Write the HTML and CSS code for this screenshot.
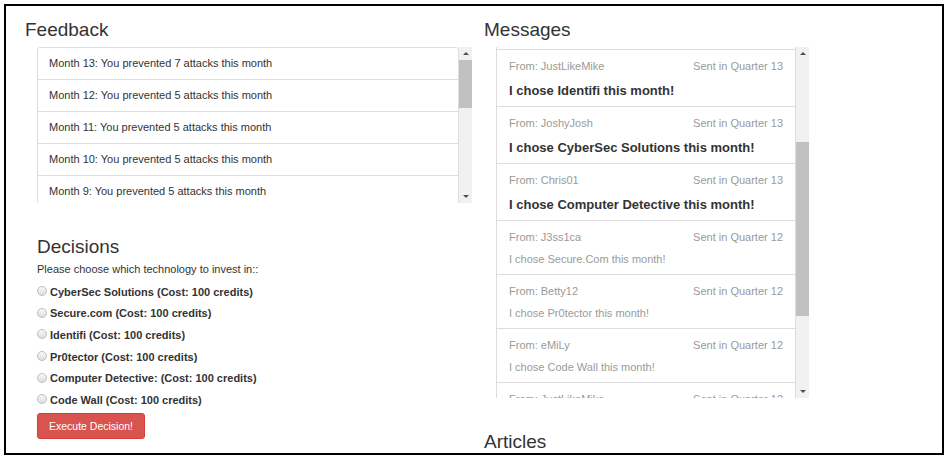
FILE: index.html
```html
<!DOCTYPE html>
<html lang="en">
<head>
  <meta charset="utf-8" />
  <title>Dashboard</title>
  <meta name="viewport" content="width=device-width, initial-scale=1" />
  <link rel="stylesheet" href="styles.css">
</head>
<body>
  <div class="frame">
    <div class="page">
      <div class="col col-left">
        <h3 class="title">Feedback</h3>
        <div class="scroll-box feedback-box">
          <ul class="list feedback">
            <li>Month 13: You prevented 7 attacks this month</li>
            <li>Month 12: You prevented 5 attacks this month</li>
            <li>Month 11: You prevented 5 attacks this month</li>
            <li>Month 10: You prevented 5 attacks this month</li>
            <li>Month 9: You prevented 5 attacks this month</li>
            <li>Month 8: You prevented 4 attacks this month</li>
            <li>Month 7: You prevented 4 attacks this month</li>
            <li>Month 6: You prevented 6 attacks this month</li>
            <li>Month 5: You prevented 3 attacks this month</li>
            <li>Month 4: You prevented 3 attacks this month</li>
            <li>Month 3: You prevented 2 attacks this month</li>
            <li>Month 2: You prevented 2 attacks this month</li>
            <li>Month 1: You prevented 1 attacks this month</li>
          </ul>
          <div class="scrollbar">
            <span class="arrow up"></span>
            <div class="track"><div class="thumb" style="margin-top: 0; height: 48px"></div></div>
            <span class="arrow down"></span>
          </div>
        </div>

        <div class="decisions">
          <h3 class="title">Decisions</h3>
          <p class="hint">Please choose which technology to invest in::</p>
          <label class="radio"><input type="radio" name="tech" />CyberSec Solutions (Cost: 100 credits)</label>
          <label class="radio"><input type="radio" name="tech" />Secure.com (Cost: 100 credits)</label>
          <label class="radio"><input type="radio" name="tech" />Identifi (Cost: 100 credits)</label>
          <label class="radio"><input type="radio" name="tech" />Pr0tector (Cost: 100 credits)</label>
          <label class="radio"><input type="radio" name="tech" />Computer Detective: (Cost: 100 credits)</label>
          <label class="radio"><input type="radio" name="tech" />Code Wall (Cost: 100 credits)</label>
          <button class="btn-danger">Execute Decision!</button>
        </div>
      </div>

      <div class="col col-right">
        <h3 class="title">Messages</h3>
        <div class="scroll-box messages-box">
          <ul class="list messages" id="messages">
            <li class="msg new">
              <div class="msg-head"><span>From: Betty12</span><span>Sent in Quarter 13</span></div>
              <div class="msg-body">I chose Code Wall this month!</div>
            </li>
            <li class="msg new">
              <div class="msg-head"><span>From: eMiLy</span><span>Sent in Quarter 13</span></div>
              <div class="msg-body">I chose Secure.Com this month!</div>
            </li>
            <li class="msg new">
              <div class="msg-head"><span>From: J3ss1ca</span><span>Sent in Quarter 13</span></div>
              <div class="msg-body">I chose Pr0tector this month!</div>
            </li>
            <li class="msg new">
              <div class="msg-head"><span>From: JustLikeMike</span><span>Sent in Quarter 13</span></div>
              <div class="msg-body">I chose Identifi this month!</div>
            </li>
            <li class="msg new">
              <div class="msg-head"><span>From: JoshyJosh</span><span>Sent in Quarter 13</span></div>
              <div class="msg-body">I chose CyberSec Solutions this month!</div>
            </li>
            <li class="msg new">
              <div class="msg-head"><span>From: Chris01</span><span>Sent in Quarter 13</span></div>
              <div class="msg-body">I chose Computer Detective this month!</div>
            </li>
            <li class="msg">
              <div class="msg-head"><span>From: J3ss1ca</span><span>Sent in Quarter 12</span></div>
              <div class="msg-body">I chose Secure.Com this month!</div>
            </li>
            <li class="msg">
              <div class="msg-head"><span>From: Betty12</span><span>Sent in Quarter 12</span></div>
              <div class="msg-body">I chose Pr0tector this month!</div>
            </li>
            <li class="msg">
              <div class="msg-head"><span>From: eMiLy</span><span>Sent in Quarter 12</span></div>
              <div class="msg-body">I chose Code Wall this month!</div>
            </li>
            <li class="msg">
              <div class="msg-head"><span>From: JustLikeMike</span><span>Sent in Quarter 12</span></div>
              <div class="msg-body">I chose Identifi this month!</div>
            </li>
            <li class="msg">
              <div class="msg-head"><span>From: JoshyJosh</span><span>Sent in Quarter 12</span></div>
              <div class="msg-body">I chose Code Wall this month!</div>
            </li>
            <li class="msg">
              <div class="msg-head"><span>From: Chris01</span><span>Sent in Quarter 12</span></div>
              <div class="msg-body">I chose Secure.Com this month!</div>
            </li>
          </ul>
          <div class="scrollbar">
            <span class="arrow up"></span>
            <div class="track"><div class="thumb" style="margin-top: 82px; height: 174px"></div></div>
            <span class="arrow down"></span>
          </div>
        </div>
        <h3 class="title">Articles</h3>
      </div>
    </div>
  </div>

  <script>
    const messages = document.getElementById("messages");
    const firstUnread = messages.children[3];
    messages.scrollTop = firstUnread.offsetTop - messages.offsetTop - 2;
  </script>
</body>
</html>
```

FILE: styles.css
```css
* {
  box-sizing: border-box;
}
body {
  margin: 0;
  background: #fff;
  color: #333;
  font-family: "Liberation Sans", Arial, sans-serif;
  font-size: 11px;
}
.frame {
  position: relative;
  margin: 4px 0 0 4px;
  width: 940px;
  height: 451px;
  border: 2px solid #000;
  overflow: hidden;
}
.frame::after {
  content: "";
  position: absolute;
  right: -2px;
  bottom: -1px;
  width: 1px;
  height: 21px;
  background: #000;
}
.page {
  display: flex;
  padding-top: 13px;
}
.col-left {
  width: 478px;
  padding-left: 19px;
}
.col-right {
  flex: 1;
}
.title {
  margin: 0 0 7px;
  font-size: 19px;
  font-weight: normal;
  line-height: 21px;
  color: #333;
}

/* scrollable list with its bar */
.scroll-box {
  display: flex;
  margin: 0 0 33px 12px;
}
.feedback-box {
  width: 435px;
  height: 156px;
}
.messages-box {
  width: 313px;
  height: 351px;
}
.scrollbar {
  display: flex;
  flex-direction: column;
  width: 13px;
  background: #f1f1f1;
}
.track {
  flex: 1;
}
.thumb {
  background: #c1c1c1;
}
.arrow {
  display: flex;
  justify-content: center;
  align-items: center;
  height: 13px;
}
.arrow::before {
  content: "";
  border-left: 3px solid transparent;
  border-right: 3px solid transparent;
}
.arrow.up::before {
  border-bottom: 3px solid #505050;
}
.arrow.down::before {
  border-top: 3px solid #505050;
}

.list {
  flex: 1;
  list-style: none;
  margin: 0;
  padding: 0;
  overflow: hidden;
}
.list li {
  border: 1px solid #ddd;
  margin-bottom: -1px;
  background: #fff;
}
.list li:first-child {
  border-radius: 3px 3px 0 0;
}
.feedback li {
  height: 33px;
  padding: 0 11px;
  line-height: 31px;
}
.msg {
  padding: 8px 12px 7px;
}
.msg-head {
  display: flex;
  justify-content: space-between;
  margin-bottom: 6px;
  line-height: 16px;
  color: #9a9a9a;
}
.msg-body {
  line-height: 16px;
  color: #9a9a9a;
}
.msg.new .msg-body {
  font-size: 13px;
  font-weight: bold;
  line-height: 19px;
  padding-top: 1px;
  margin-bottom: -1px;
  color: #333;
}

/* decisions */
.decisions {
  margin-left: 12px;
}
.decisions .title {
  margin-bottom: 4px;
}
.hint {
  margin: 0 0 4px;
  line-height: 16px;
}
.radio {
  display: flex;
  align-items: center;
  height: 21.6px;
  font-weight: bold;
  color: #333;
}
.radio input {
  appearance: none;
  width: 10px;
  height: 10px;
  margin: 0 3px 1px 0;
  border: 1px solid #bdbdbd;
  border-radius: 50%;
  background: linear-gradient(#f8f8f8, #dedede);
}
.btn-danger {
  display: block;
  margin-top: 2px;
  width: 108px;
  height: 26px;
  padding: 0;
  border: 1px solid #d43f3a;
  border-radius: 3px;
  background: #d9534f;
  color: #fff;
  font-family: inherit;
  font-size: 10.5px;
}
```
